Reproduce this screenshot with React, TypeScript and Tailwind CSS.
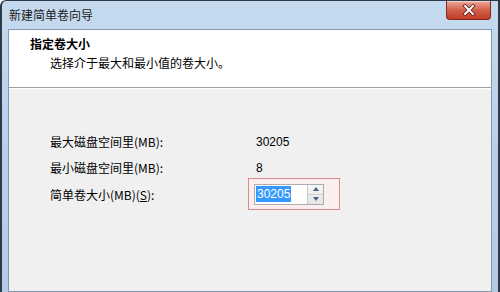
import React from "react";

const cjk = { fontFamily: '"Noto Sans CJK SC", "DejaVu Sans", sans-serif' };
const latin = { fontFamily: '"Liberation Sans", sans-serif' };

function CloseButton() {
  return (
    <div className="absolute right-[7px] top-0 flex h-[19px] w-[45px] items-center justify-center rounded-b-[4px] border border-t-0 border-[#7a2c22] bg-gradient-to-b from-[#e9a99a] via-[#d4604a] to-[#c23a24] shadow-[inset_0_1px_0_rgba(255,255,255,0.5)]">
      <svg width="14" height="12" viewBox="0 0 14 12" aria-hidden="true">
        <path d="M3 2 L11 10 M11 2 L3 10" stroke="#5a1a12" strokeWidth="3.6" strokeLinecap="square" />
        <path d="M3 2 L11 10 M11 2 L3 10" stroke="#ffffff" strokeWidth="2" strokeLinecap="square" />
      </svg>
    </div>
  );
}

function Spinner() {
  return (
    <div className="flex w-[16px] flex-col border-l border-[#c8c8c8] bg-gradient-to-b from-[#f6f6f6] to-[#e4e4e4]">
      <div className="flex flex-1 items-center justify-center border-b border-[#cfcfcf]">
        <svg width="6" height="4" viewBox="0 0 6 4"><path d="M3 0 L6 4 L0 4 Z" fill="#4d6185" /></svg>
      </div>
      <div className="flex flex-1 items-center justify-center">
        <svg width="6" height="4" viewBox="0 0 6 4"><path d="M0 0 L6 0 L3 4 Z" fill="#4d6185" /></svg>
      </div>
    </div>
  );
}

export default function App() {
  return (
    <div
      className="relative flex h-[292px] w-[500px] flex-col overflow-hidden rounded-tl-[6px] border-l-2 border-r-2 border-t border-[#2d3a48] bg-gradient-to-b from-[#c6daef] via-[#b9d0e9] to-[#b3cbe5] px-[6px] text-[12px] text-black"
      style={cjk}
    >
      <div className="flex h-[28px] shrink-0 items-center pl-[1px] text-[12px] text-[#1b1b1b]">
        新建简单卷向导
      </div>
      <CloseButton />

      <div className="flex flex-1 flex-col border border-[#8597ab] bg-[#f0f0f0]">
        <div className="flex h-[58px] shrink-0 flex-col border-b border-[#a0a0a0] bg-white pl-[21px] pt-[6px] shadow-[0_1px_0_#ffffff]">
          <div className="text-[12px] font-bold leading-[16px]">指定卷大小</div>
          <div className="pl-[20px] pt-[3px] text-[12px] leading-[16px]">选择介于最大和最小值的卷大小。</div>
        </div>

        <div className="grid grid-cols-[205px_1fr] pl-[41px] pt-[41px] leading-[16px]">
          <div className="flex h-[26px] items-center">最大磁盘空间里(MB):</div>
          <div className="flex h-[26px] items-center pl-[1px]" style={latin}>
            30205
          </div>
          <div className="flex h-[26px] items-center">最小磁盘空间里(MB):</div>
          <div className="flex h-[26px] items-center pl-[1px]" style={latin}>
            8
          </div>
          <div className="mt-[1px] flex h-[26px] items-center">
            简单卷大小(MB)(<span className="underline">S</span>):
          </div>
          <div className="-ml-[7px] -mt-[3px] flex h-[32px] w-[92px] items-center border border-[#d98a8a] bg-[#fbeeee] pl-[5px]">
            <div className="flex h-[21px] w-[70px] border border-[#abadb3] bg-white">
              <div className="flex flex-1 items-center pl-[1px]">
                <span className="bg-[#3399ff] px-[1px] text-[12px] leading-[16px] text-white" style={latin}>
                  30205
                </span>
              </div>
              <Spinner />
            </div>
          </div>
        </div>
      </div>
    </div>
  );
}
